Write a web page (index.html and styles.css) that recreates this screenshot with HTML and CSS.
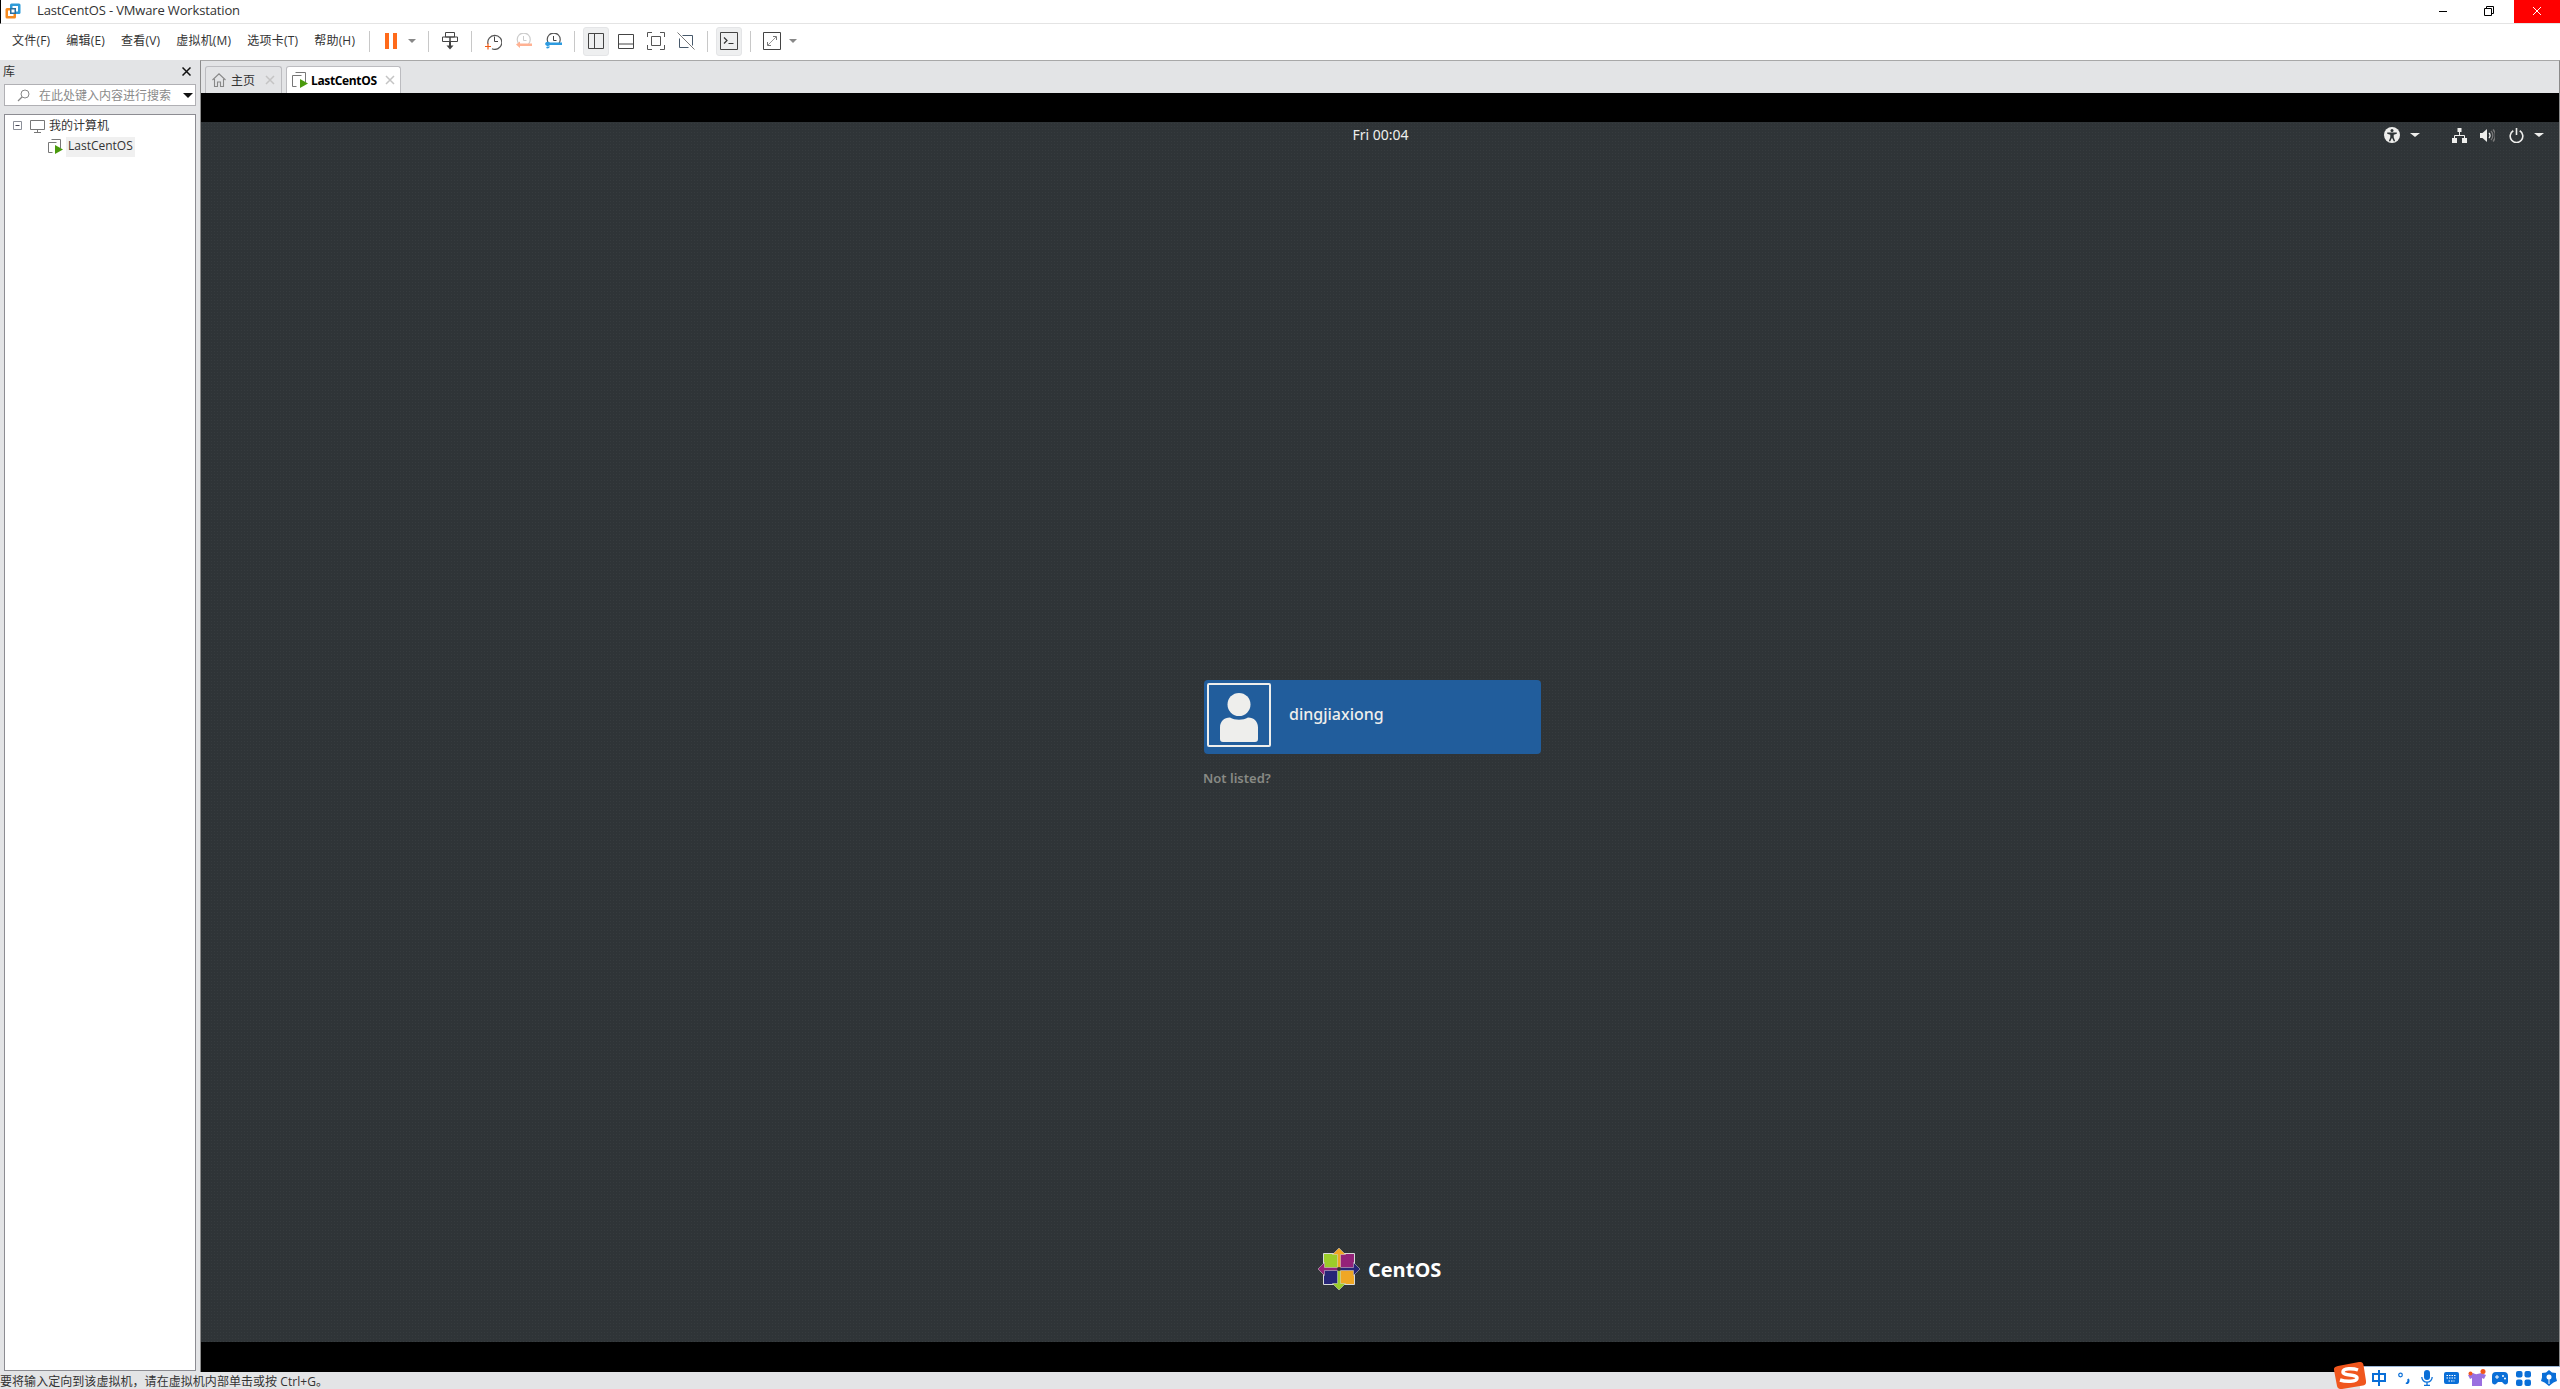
FILE: index.html
```html
<!DOCTYPE html>
<html lang="zh-CN">
<head>
    <meta charset="UTF-8">
    <title>LastCentOS - VMware Workstation</title>
    <link rel="stylesheet" href="styles.css">
</head>
<body>
    <header class="titlebar">
        <svg class="app-icon" width="16" height="16" viewBox="0 0 16 16"><rect x="5" y="0.5" width="10.5" height="10.5" rx="1.5" fill="#2f9bd8"/><rect x="0.5" y="5" width="10.5" height="10.5" rx="1.5" fill="#f58a1f"/><rect x="3" y="7.5" width="5.5" height="5.5" fill="#fff"/><rect x="7.5" y="3" width="5.5" height="5.5" fill="#fff"/><rect x="5" y="5" width="6" height="6" fill="#2b6f9e"/><rect x="6.5" y="6.5" width="3" height="3" fill="#fff"/></svg>
        <span class="app-title">LastCentOS - VMware Workstation</span>
        <div class="win-btns">
            <div class="win-btn"><svg width="10" height="10" viewBox="0 0 10 10"><path d="M1 5.5h8" stroke="#000" fill="none"/></svg></div>
            <div class="win-btn"><svg width="12" height="12" viewBox="0 0 12 12"><path d="M1.5 3.5h7v7h-7zM3.500 3.500v-2h7v7h-2" stroke="#000" fill="none"/></svg></div>
            <div class="win-btn close"><svg width="10" height="10" viewBox="0 0 10 10"><path d="M1 1l8 8M9 1l-8 8" stroke="#fff" fill="none"/></svg></div>
        </div>
    </header>

    <div class="toolbar">
        <nav class="menu">
            <span>文件(F)</span>
            <span>编辑(E)</span>
            <span>查看(V)</span>
            <span>虚拟机(M)</span>
            <span>选项卡(T)</span>
            <span>帮助(H)</span>
        </nav>
        <i class="sep"></i>
        <div class="tool"><svg width="12" height="16" viewBox="0 0 12 16"><path d="M0 0h4v16H0zM8 0h4v16H8z" fill="#ff6a1a"/></svg></div>
        <div class="tool-caret"><i class="caret"></i></div>
        <i class="sep"></i>
        <div class="tool"><svg width="16" height="18" viewBox="0 0 16 18"><path d="M3.500.5h9v4.500h-9zM.5 5h7.500v4.500H.5zM8 5h7.500v4.500H8z" fill="#fff" stroke="#444"/><path d="M8 10v4" stroke="#444" stroke-width="2"/><path d="M4.500 13.500h7L8 17.500z" fill="#444"/></svg></div>
        <i class="sep"></i>
        <div class="tool"><svg width="17" height="17" viewBox="0 0 17 17"><path d="M3 11a7 7 0 1 1 4 4.800" fill="none" stroke="#555" stroke-width="1.200"/><path d="M9.500 3.500v5h3.500" fill="none" stroke="#444"/><path d="M0 13.500h6M3 10.500v6" stroke="#f05a14" stroke-width="1.200"/></svg></div>
        <div class="tool"><svg width="17" height="16" viewBox="0 0 17 16"><path d="M4 11a6.500 6.500 0 1 1 9.500 0" fill="none" stroke="#ccc" stroke-width="1.200"/><path d="M8.500 3v4.500h3" fill="none" stroke="#ccc"/><path d="M1 11.500l4-3v2h12v2.500H5v2z" fill="#ffb293"/></svg></div>
        <div class="tool"><svg width="17" height="16" viewBox="0 0 17 16"><path d="M4 11a6.500 6.500 0 1 1 9.500 0" fill="none" stroke="#555" stroke-width="1.200"/><path d="M8.500 3v4.500h3" fill="none" stroke="#444"/><path d="M0 11a3 3 0 0 1 5-1.500h12v2.500H5a3 3 0 0 1-5-1zM1 15a3 3 0 0 0 4-1.500H2z" fill="#2d9be0"/></svg></div>
        <i class="sep"></i>
        <div class="tool on"><svg width="16" height="16" viewBox="0 0 16 16"><path d="M.5.5h15v15H.5zM6.500.5v15" fill="none" stroke="#444"/></svg></div>
        <div class="tool"><svg width="16" height="15" viewBox="0 0 16 15"><path d="M.5.5h15v14H.5zM.5 10h15" fill="none" stroke="#444"/></svg></div>
        <div class="tool"><svg width="18" height="18" viewBox="0 0 18 18"><path d="M.5 5V.5H5M13 .5h4.500V5M17.500 13v4.500H13M5 17.500H.5V13" fill="none" stroke="#555"/><path d="M4.500 4.500h9v9h-9z" fill="none" stroke="#555"/></svg></div>
        <div class="tool"><svg width="18" height="18" viewBox="0 0 18 18"><path d="M5.500 3.500h10v10M2.500 6.500v9h9" fill="none" stroke="#47596b"/><path d="M.5.500l17 17" stroke="#777"/></svg></div>
        <i class="sep"></i>
        <div class="tool on"><svg width="18" height="18" viewBox="0 0 18 18"><path d="M.5.5h17v17H.5z" fill="none" stroke="#444"/><path d="M4 5.500l3 3-3 3" fill="none" stroke="#333" stroke-width="1.200"/><path d="M8.500 11.500h5" stroke="#333"/></svg></div>
        <i class="sep"></i>
        <div class="tool"><svg width="18" height="18" viewBox="0 0 18 18"><path d="M.5.5h17v17H.5z" fill="none" stroke="#444"/><path d="M5 13l8-8" stroke="#999"/><path d="M10 4.500h3.500V8M8 13.500H4.500V10" fill="none" stroke="#777"/></svg></div>
        <div class="tool-caret"><i class="caret"></i></div>
    </div>

    <main class="main">
        <aside class="sidebar">
            <div class="lib-head">
                <span>库</span>
                <svg width="9" height="9" viewBox="0 0 9 9"><path d="M.5.500l8 8M8.500.500l-8 8" stroke="#111" stroke-width="1.500"/></svg>
            </div>
            <div class="search">
                <svg width="13" height="13" viewBox="0 0 13 13"><circle cx="8" cy="5" r="4" fill="none" stroke="#888"/><path d="M5 8l-4 4" stroke="#888" stroke-width="1.200"/></svg>
                <span class="search-text">在此处键入内容进行搜索</span>
                <i class="caret black"></i>
            </div>
            <div class="tree">
                <div class="tree-row">
                    <svg class="expander" width="9" height="9" viewBox="0 0 9 9"><path d="M.5.500h8v8h-8z" fill="#fff" stroke="#8b8f98"/><path d="M2.500 4.500h4" stroke="#445"/></svg>
                    <svg class="pc-icon" width="15" height="14" viewBox="0 0 15 14"><path d="M.5 1.500h14v9H.5z" fill="#fff" stroke="#777"/><path d="M7.500 10.500v2.500M4 13.500h7" stroke="#777"/></svg>
                    <span class="tree-text">我的计算机</span>
                </div>
                <div class="tree-row child">
                    <svg width="15" height="15" viewBox="0 0 15 15"><path d="M3.500.5h9v9M.5 3.500h8M.5 3.500v10h4" fill="none" stroke="#777"/><path d="M7 6l8 4.500-8 4.500z" fill="#4a9a0c"/></svg>
                    <span class="tree-sel">LastCentOS</span>
                </div>
            </div>
        </aside>

        <section class="vm">
            <div class="tabs">
                <div class="tab">
                    <svg width="14" height="14" viewBox="0 0 14 14"><path d="M.5 7L7 .8 13.500 7M2.500 6v7.500h3V9h3v4.500h3V6" fill="none" stroke="#888" stroke-width="1.100"/></svg>
                    <span class="tab-name">主页</span>
                    <svg class="tab-close" width="10" height="10" viewBox="0 0 10 10"><path d="M1 1l8 8M9 1l-8 8" stroke="#c4c4c4" stroke-width="1.500"/></svg>
                </div>
                <div class="tab active">
                    <svg width="16" height="16" viewBox="0 0 16 16"><path d="M3.500.5h10v10M.5 3.500h9M.5 3.500v11h4" fill="none" stroke="#777"/><path d="M8 7l8 4.500L8 16z" fill="#4a9a0c"/></svg>
                    <span class="tab-name">LastCentOS</span>
                    <svg class="tab-close" width="10" height="10" viewBox="0 0 10 10"><path d="M1 1l8 8M9 1l-8 8" stroke="#c4c4c4" stroke-width="1.500"/></svg>
                </div>
            </div>
            <div class="screen">
                <div class="guest">
                    <div class="gnome-bar">
                        <span></span>
                        <span class="clock">Fri 00:04</span>
                        <div class="gnome-icons">
                            <svg class="a11y" width="16" height="16" viewBox="0 0 16 16"><circle cx="8" cy="8" r="8" fill="#eeeeec"/><circle cx="8" cy="3.600" r="1.500" fill="#2e3436"/><path d="M3.200 5.500h9.600v1.300L9.700 7.700v2.500l1.500 4h-1.500L8 10.800l-1.700 3.400H4.800l1.500-4V7.700L3.200 6.800z" fill="#2e3436"/></svg>
                            <i class="caret light gap-a"></i>
                            <svg class="gap-b" width="15" height="15" viewBox="0 0 15 15"><path d="M5.500 0h4v4h-4zM0 10h5v5H0zM10 10h5v5h-5z" fill="#eeeeec"/><path d="M7.500 4v3.500M2.500 10V7.500h10V10" fill="none" stroke="#eeeeec"/></svg>
                            <svg class="gap-c" width="15" height="15" viewBox="0 0 15 15"><path d="M0 5h2.500L7 1v13L2.500 10H0z" fill="#eeeeec"/><path d="M9 5a3.500 3.500 0 0 1 0 5" fill="none" stroke="#eeeeec" stroke-width="1.300"/><path d="M11 3a6.500 6.500 0 0 1 0 9M13 1.500a9 9 0 0 1 0 12" fill="none" stroke="#777" stroke-width="1.300"/></svg>
                            <svg class="gap-d" width="15" height="15" viewBox="0 0 15 15"><path d="M4.300 2.800a6.300 6.300 0 1 0 6.400 0" fill="none" stroke="#eeeeec" stroke-width="1.600"/><path d="M7.500 0v7" stroke="#eeeeec" stroke-width="1.600"/></svg>
                            <i class="caret light gap-e"></i>
                        </div>
                    </div>
                    <div class="user-card">
                        <div class="avatar">
                            <svg width="38" height="50" viewBox="0 0 38 50"><circle cx="19" cy="11.500" r="11.500" fill="#eeeeec"/><path d="M10 24.500c5 3 13 3 18 0 6 0 10 4 10 10V46a3 3 0 0 1-3 3H3a3 3 0 0 1-3-3V34.500c0-6 4-10 10-10z" fill="#eeeeec"/></svg>
                        </div>
                        <span class="user-name">dingjiaxiong</span>
                    </div>
                    <div class="not-listed">Not listed?</div>
                    <div class="centos">
                        <svg width="44" height="44" viewBox="0 0 44 44">
                            <path d="M6.500 6.500h15v15h-15z" fill="#9ccd2a" stroke="#d8d8d8"/>
                            <path d="M22.500 6.500h15v15h-15z" fill="#932279" stroke="#d8d8d8"/>
                            <path d="M22.500 22.500h15v15h-15z" fill="#efa724" stroke="#d8d8d8"/>
                            <path d="M6.500 22.500h15v15h-15z" fill="#262577" stroke="#d8d8d8"/>
                            <path d="M22 1l6.500 6.500h-5V20L22 22l-1.500-2V7.500h-5z" fill="#efa724" stroke="#d8d8d8" stroke-width="0.500"/>
                            <path d="M43 22l-6.500 6.500v-5H24L22 22l2-1.500h12.500v-5z" fill="#262577" stroke="#d8d8d8" stroke-width="0.500"/>
                            <path d="M22 43l-6.500-6.500h5V24l1.500-2 1.500 2v12.500h5z" fill="#9ccd2a" stroke="#d8d8d8" stroke-width="0.500"/>
                            <path d="M1 22l6.500-6.500v5H20l2 1.500-2 1.500H7.500v5z" fill="#932279" stroke="#d8d8d8" stroke-width="0.500"/>
                            <circle cx="22" cy="22" r="2" fill="#333"/>
                        </svg>
                        <span class="centos-name">CentOS</span>
                    </div>
                </div>
            </div>
        </section>
    </main>

    <footer class="status">要将输入定向到该虚拟机，请在虚拟机内部单击或按 Ctrl+G。</footer>

    <!-- input method bar floats above the window -->
    <div class="ime">
        <svg class="ime-logo" width="32" height="27" viewBox="0 0 32 27"><path d="M4 4L25 0c3-.5 4 1 4.500 3L32 19c.5 3-1 4-3 4.500L8 27c-3 .5-4.500-1-5-3L0 8c-.5-2 1-3.500 4-4z" fill="#f0561d"/><path d="M24 8c-5-2-15-2-15 2 0 4 14 2 14 6 0 4-11 4-17 2" fill="none" stroke="#fff" stroke-width="3.500"/></svg>
        <div class="ime-icons">
            <svg width="14" height="16" viewBox="0 0 14 16"><path d="M1 4h12v7H1zM7 0v16" fill="none" stroke="#0a6fd8" stroke-width="2"/></svg>
            <svg class="gap-12" width="12" height="12" viewBox="0 0 12 12"><circle cx="2.500" cy="3" r="1.800" fill="none" stroke="#0a6fd8" stroke-width="1.200"/><path d="M10 7c1 2 0 4-2 5" fill="none" stroke="#0a6fd8" stroke-width="2"/></svg>
            <svg class="gap-11" width="12" height="16" viewBox="0 0 12 16"><rect x="3" y="0" width="6" height="10" rx="3" fill="#0a6fd8"/><path d="M.8 7a5.200 5.200 0 0 0 10.400 0M6 12v3.500M3 15.500h6" fill="none" stroke="#0a6fd8" stroke-width="1.300"/></svg>
            <svg class="gap-11" width="15" height="12" viewBox="0 0 15 12"><rect width="15" height="12" rx="2" fill="#0a6fd8"/><path d="M2.500 3.500h10M2.500 6h10M4.500 9h6" stroke="#fff" stroke-width="1.200" stroke-dasharray="1.500 1"/></svg>
            <svg class="gap-9" width="18" height="18" viewBox="0 0 18 18"><path d="M0 6l5-2c2 1.500 4 1.500 8 0l5 2-2 4-2-1v8H4V9l-2 1z" fill="#9a6fe0"/><circle cx="15" cy="2.500" r="2.500" fill="#f0561d"/><circle cx="2.500" cy="4.500" r="2" fill="#f0561d"/></svg>
            <svg class="gap-6" width="16" height="13" viewBox="0 0 16 13"><path d="M4 0h8a4 4 0 0 1 4 4v6a2.500 2.500 0 0 1-4.500 1.500L10 10H6l-1.500 1.500A2.500 2.500 0 0 1 0 10V4a4 4 0 0 1 4-4z" fill="#0a6fd8"/><path d="M3 5h4M5 3v4" stroke="#fff"/><circle cx="11" cy="4" r="1" fill="#fff"/><circle cx="13" cy="6.500" r="1" fill="#fff"/></svg>
            <svg class="gap-8" width="15" height="15" viewBox="0 0 15 15"><rect width="6.500" height="6.500" rx="2" fill="#0a6fd8"/><rect x="8.500" width="6.500" height="6.500" rx="2" fill="#0a6fd8"/><rect y="8.500" width="6.500" height="6.500" rx="2" fill="#0a6fd8"/><rect x="8.500" y="8.500" width="6.500" height="6.500" rx="2" fill="#0a6fd8"/></svg>
            <svg class="gap-10" width="16" height="16" viewBox="0 0 16 16"><path d="M8 0l3 2.500 4 .5v4.500L16 11l-3.500 1.500L8 16l-4.500-3.500L0 11l1-3.500V3l4-.5z" fill="#0a6fd8"/><circle cx="8" cy="7" r="2.500" fill="#fff"/><path d="M8 8v6" stroke="#fff"/></svg>
        </div>
    </div>
</body>
</html>
```

FILE: styles.css
```css
* {
    box-sizing: border-box;
}
html, body {
    margin: 0;
    padding: 0;
}
body {
    width: 2560px;
    height: 1389px;
    display: flex;
    flex-direction: column;
    position: relative;
    overflow: hidden;
    background-color: #e3e4e6;
    color: #222;
    font-family: "Open Sans", "Noto Sans CJK SC", sans-serif;
    font-size: 12px;
}
svg {
    display: block;
    flex: none;
}

/* window title */
.titlebar {
    height: 24px;
    display: flex;
    align-items: center;
    flex: none;
    background-color: #fff;
    border-left: 1px solid #000;
    border-bottom: 1px solid #e4e4e4;
}
.app-icon {
    margin: 0 0 1px 4px;
}
.app-title {
    margin: 0 0 3px 16px;
    font-size: 13px;
    letter-spacing: -0.15px;
    color: #333;
}
.win-btns {
    margin-left: auto;
    display: flex;
    align-self: stretch;
}
.win-btn {
    width: 46px;
    padding: 0 4px 1px 0;
    display: flex;
    align-items: center;
    justify-content: center;
}
.win-btn.close {
    padding-right: 0;
    background-color: #f00;
}

/* menu and tools */
.toolbar {
    height: 36px;
    flex: none;
    display: flex;
    align-items: center;
    background-color: #fff;
    padding: 0 0 2px 12px;
}
.menu {
    display: flex;
    gap: 16px;
    width: 345px;
    margin: 0 12px 3px 0;
    font-size: 12px;
    letter-spacing: 0.2px;
    color: #333;
    white-space: nowrap;
}
.sep {
    width: 1px;
    height: 21px;
    margin: 0 6px;
    background-color: #c8c8c8;
    flex: none;
}
.toolbar > .sep:first-of-type {
    margin-left: 0;
}
.tool {
    width: 30px;
    height: 29px;
    display: flex;
    align-items: center;
    justify-content: center;
    flex: none;
}
.tool.on {
    width: 26px;
    margin: 0 2px;
    background-color: #eeeff0;
    border: 1px solid #e4e5e7;
    border-radius: 3px;
}
.tool-caret {
    width: 16px;
    padding-left: 2px;
    flex: none;
}
.caret {
    display: block;
    width: 0;
    height: 0;
    border-left: 4px solid transparent;
    border-right: 4px solid transparent;
    border-top: 4px solid #888;
}
.caret.black {
    border-left-width: 5px;
    border-right-width: 5px;
    border-top: 5px solid #111;
}
.caret.light {
    border-left-width: 5px;
    border-right-width: 5px;
    border-top: 4px solid #eeeeec;
}

/* main area */
.main {
    flex: 1;
    display: flex;
    min-height: 0;
}
.sidebar {
    width: 200px;
    flex: none;
    display: flex;
    flex-direction: column;
    padding: 0 4px 1px;
}
.lib-head {
    height: 24px;
    display: flex;
    align-items: center;
    justify-content: space-between;
    padding: 0 5px 1px 0;
    color: #333;
}
.lib-head span {
    margin: 0 0 2px -1px;
}
.search {
    height: 22px;
    display: flex;
    align-items: center;
    padding-left: 12px;
    background-color: #fff;
    border: 1px solid #b0b0b4;
}
.search-text {
    margin-left: 9px;
    color: #8a8a8a;
    width: 144px;
    white-space: nowrap;
}
.tree {
    flex: 1;
    margin-top: 8px;
    background-color: #fff;
    border: 1px solid #8c8c92;
}
.tree-row {
    height: 21px;
    display: flex;
    align-items: center;
    padding-left: 8px;
    color: #333;
    white-space: nowrap;
}
.pc-icon {
    margin: 0 4px 0 8px;
}
.tree-text {
    margin-bottom: 2px;
}
.tree-row.child {
    padding-left: 43px;
}
.tree-sel {
    margin-left: 3px;
    padding: 0 2px;
    height: 20px;
    line-height: 18px;
    background-color: #f0f0f0;
}

/* vm pane */
.vm {
    flex: 1;
    display: flex;
    flex-direction: column;
    min-width: 0;
    border-top: 1px solid #a8a8a8;
    border-left: 1px solid #8b8b8b;
    border-right: 1px solid #8b8b8b;
}
.tabs {
    height: 32px;
    flex: none;
    display: flex;
    align-items: flex-end;
    gap: 4px;
    padding-left: 4px;
}
.tab {
    width: 77px;
    height: 27px;
    display: flex;
    align-items: center;
    padding: 0 6px;
    border: 1px solid #bcbcc0;
    border-bottom: none;
    border-radius: 3px 3px 0 0;
    color: #333;
}
.tab.active {
    width: 115px;
    padding: 0 5px;
    background-color: #fff;
    color: #000;
    font-weight: 700;
    letter-spacing: -0.35px;
}
.tab-name {
    margin-left: 5px;
    white-space: nowrap;
}
.tab.active .tab-name {
    margin-left: 3px;
}
.tab-close {
    margin-left: auto;
}
.screen {
    flex: 1;
    display: flex;
    padding: 29px 0 30px;
    background-color: #000;
    min-height: 0;
}

/* guest login screen */
.guest {
    flex: 1;
    display: flex;
    flex-direction: column;
    background-color: #2f3437;
    background-image: radial-gradient(rgba(255, 255, 255, 0.035) 1px, transparent 1px);
    background-size: 3px 3px;
    color: #eeeeec;
    font-family: "Noto Sans", "Open Sans", sans-serif;
}
.gnome-bar {
    height: 24px;
    display: grid;
    grid-template-columns: 1fr auto 1fr;
    align-items: center;
    flex: none;
}
.clock {
    font-size: 14px;
    padding-left: 1px;
}
.gnome-icons {
    display: flex;
    align-items: center;
    justify-self: end;
    padding: 2px 15px 0 0;
}
.gap-a { margin-left: 10px; }
.gap-b { margin-left: 32px; }
.gap-c { margin-left: 13px; }
.gap-d { margin-left: 14px; }
.gap-e { margin-left: 10px; }
.user-card {
    width: 337px;
    height: 74px;
    margin: 534px 0 0 1003px;
    padding: 3px;
    display: flex;
    align-items: flex-start;
    background-color: #215d9c;
    border-radius: 4px;
}
.avatar {
    width: 64px;
    height: 64px;
    padding-top: 8px;
    display: flex;
    justify-content: center;
    border: 2px solid #eeeeec;
    border-radius: 2px;
}
.user-name {
    margin: 19px 0 0 18px;
    font-size: 16px;
    font-weight: 500;
    line-height: 24px;
}
.not-listed {
    margin: 15px 0 0 1002px;
    font-size: 13px;
    font-weight: 600;
    color: #888a85;
}
.centos {
    margin: auto 0 51px 1116px;
    display: flex;
    align-items: center;
}
.centos-name {
    margin-left: 7px;
    font-size: 20px;
    font-weight: 700;
    color: #fff;
    font-family: "Open Sans", sans-serif;
}

/* status line */
.status {
    height: 17px;
    flex: none;
    line-height: 20px;
    letter-spacing: 0.05px;
    overflow: hidden;
    white-space: nowrap;
    color: #333;
}

/* input method bar */
.ime {
    position: absolute;
    right: 0;
    bottom: 0;
    width: 226px;
    height: 27px;
    display: flex;
    align-items: flex-end;
}
.ime-logo {
    position: absolute;
    left: 0;
    top: 0;
    z-index: 1;
}
.ime-icons {
    width: 200px;
    height: 23px;
    margin-left: 26px;
    padding-left: 12px;
    display: flex;
    align-items: center;
    background-color: #fff;
    border-top: 1px solid #9bb7d8;
}
.gap-6 { margin-left: 6px; }
.gap-8 { margin-left: 8px; }
.gap-9 { margin-left: 9px; }
.gap-10 { margin-left: 10px; }
.gap-11 { margin-left: 11px; }
.gap-12 { margin-left: 12px; }
```
